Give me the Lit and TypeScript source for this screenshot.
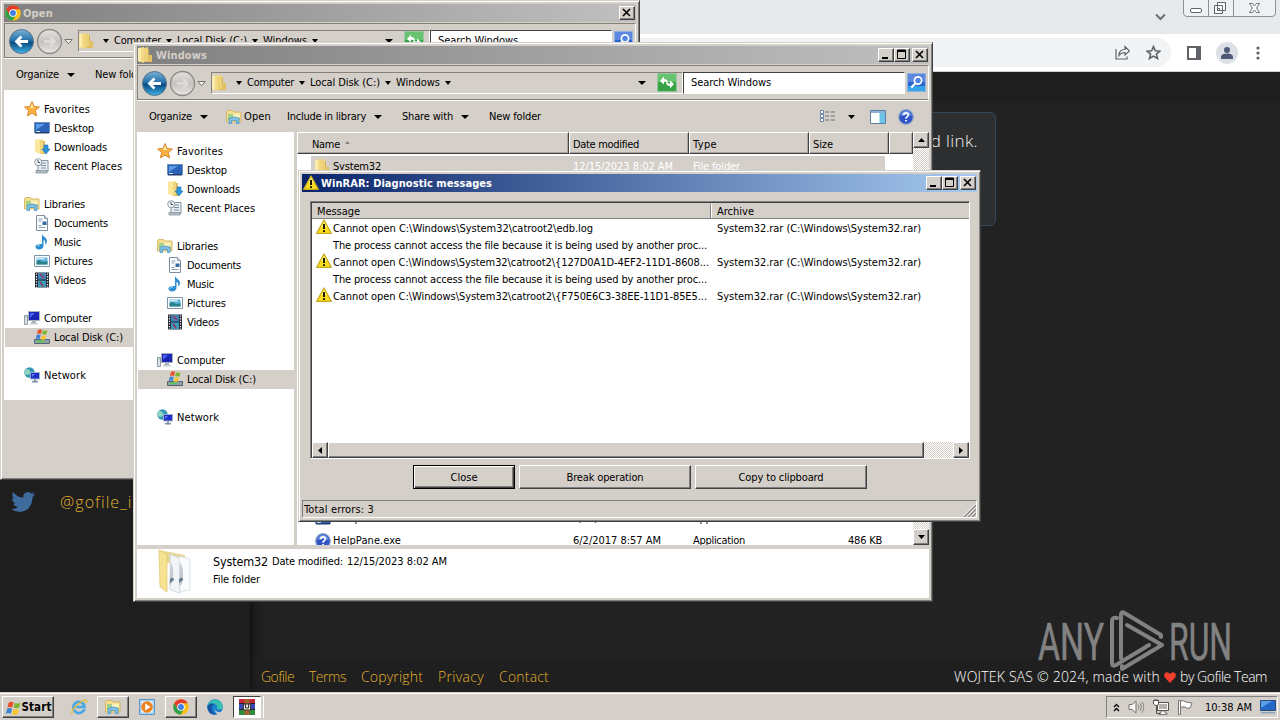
import { LitElement, html, css, svg } from "lit";
import { customElement, property } from "lit/decorators.js";
import { classMap } from "lit/directives/class-map.js";
import { styleMap } from "lit/directives/style-map.js";

const icon = (content: unknown, w = 16, h = 16, box = "0 0 16 16") =>
  html`<svg width=${w} height=${h} viewBox=${box}>${content}</svg>`;

const folder = svg`<path d="M0 1l6-1v16l-6-2z" fill="#f3d984"/><path d="M6 2h4l1 1v12H6z" fill="#d6ad4c"/><path d="M0 1h3v14l-3-1z" fill="#f9ecad"/><path d="M6 1l4-1v14l-4 1z" fill="#ecd179"/><path d="M10 8h4v7h-4z" fill="#e3c061"/>`;

const star = svg`<path d="M8 .5l2.100 5 5.400.5-4.200 3.600 1.400 5.400L8 12.200 3.300 15l1.400-5.400L.5 6l5.400-.5z" fill="#fbb040" stroke="#d98a38"/><path d="M8 2.500l1.400 4 2.600.6H6z" fill="#fff0a8"/>`;

const desktop = svg`<path d="M.5 2.500h15v10H.5z" fill="#2a62b8" stroke="#6d8fb5"/><path d="M2 4h9L2 10z" fill="#5a9ce6"/><path d="M1 12h14v1.500H1z" fill="#25406e"/><path d="M2 11h4v1H2z" fill="#cde"/>`;

const downloads = svg`<path d="M1 1l5-1v15l-5-2z" fill="#f9e79a"/><path d="M6 2h5v13H6z" fill="#dfbc5b"/><path d="M6 1l3-1v14l-3 1z" fill="#f0d67e"/><path d="M10 6h4v4h2l-4 5-4-5h2z" fill="#2b94dd" stroke="#1d6fb5" stroke-width=".6"/>`;

const recent = svg`<path d="M5 2.500h9v11H4v-6z" fill="#e8eef2" stroke="#8795a0"/><path d="M2 12.500h11v2.500H2z" fill="#b5c0c8" stroke="#7a8790" stroke-width=".7"/><path d="M7 5h5M7 7.500h5M7 10h5" stroke="#7d8f9f"/><circle cx="4.200" cy="4.200" r="3.500" fill="#f3f8fb" stroke="#8b9aa5"/><path d="M4 2v2.500h2" stroke="#456" fill="none"/>`;

const libraries = svg`<path d="M.5 3l1-1.500h5L8 3h7v10H.5z" fill="#f4de8b" stroke="#cfae58" stroke-width=".8"/><path d="M2 5h12v6H2z" fill="#9fd08c"/><path d="M7 4.500h7v4H7z" fill="#f9efb9"/><path d="M3 9.500q5-3 10 0v5h-2.500v-3h-5v3H3z" fill="#7fc3e8" stroke="#4e93c0" stroke-width=".8"/>`;

const documents = svg`<path d="M2.500.5h8l3 3v12h-11z" fill="#fbfdff" stroke="#7e8c9c"/><path d="M10.500.5v3h3" fill="#cbd8e6" stroke="#7e8c9c" stroke-width=".8"/><path d="M4.500 4h4M4.500 6h3M4.500 12.500h7M4.500 10.500h3" stroke="#74889f" stroke-width=".8"/><path d="M8.500 6.500h4v3.500h-4z" fill="#346ba3"/>`;

const music = svg`<path d="M8 0c1 3 5 3.500 5 7 0 2-1 3-2 3.500C12 7 10 6 9.500 6v6c0 2-2 3.500-4.500 3.500S1.500 14 1.500 12.500 3.500 10 8 10z" fill="#2e90d2"/><path d="M3 12.500q1-1.500 3-1.500" stroke="#9fdcff" fill="none"/>`;

const pictures = svg`<path d="M.5 2.500h15v11H.5z" fill="#fff" stroke="#7e95a8"/><path d="M2.500 4.500h11v7h-11z" fill="#5cb4df"/><path d="M2.500 8l3-1 4 2 4-1v3.500h-11z" fill="#2c7f8d"/><path d="M2.500 5h8v1.500h-8z" fill="#c9ebf8"/>`;

const videos = svg`<path d="M1 .5h14v15H1z" fill="#20262d"/><path d="M4 1h8v6.500H4z" fill="#3f85b8"/><path d="M4 8.500h8V15H4z" fill="#3a9bbf"/><path d="M6 2l4 4M6 10l3 4" stroke="#9b3555" stroke-width="1.500"/><path d="M2.500 1.500v14M13.500 1.500v14" stroke="#eef" stroke-width="1.300" stroke-dasharray="1.300 1.300"/>`;

const computer = svg`<path d="M.5 5.500h3v9h-3z" fill="#dce2e6" stroke="#929ca4"/><path d="M1.500 7h1" stroke="#55c040"/><path d="M4.500 1.500h11v9h-11z" fill="#1b25b5" stroke="#a8b4bd"/><path d="M6 3h5L6 8z" fill="#4a62ee"/><path d="M8 11h4v2.500H7z" fill="#aab4bd"/><path d="M6 13h8v1.500H6z" fill="#c7ced3"/>`;

const flag = svg`<path d="M4 1q2.500-1.500 4 0L7 5q-2-1-4 0z" fill="#e6532c"/><path d="M9 1.200q2 1 4.500 0L12.500 5.300Q10 6 8 5.100z" fill="#7cb42f"/><path d="M2.700 6q2-1 4 0l-1 4q-2-1-4 0z" fill="#3c83d4"/><path d="M7.800 6.200q2 1 4.500 0l-1 4.100q-2.500 1-4.500 0z" fill="#fbc52d"/>`;

const disk = svg`<path d="M.5 10.500h15v4H.5z" fill="#8fa0a8" stroke="#55656e"/><path d="M1 10l2-2h10l2 2z" fill="#cdd7dc"/><path d="M3 12.500h7" stroke="#52d04b" stroke-width="1.500"/>${flag}`;

const network = svg`<circle cx="5.500" cy="5.500" r="5.200" fill="#3798b5"/><path d="M2 2q3 0 4 2t-2 4q-3 0-3.500-2z" fill="#8ed8c0"/><path d="M6.500 5.500h9v6.500h-9z" fill="#202dc8" stroke="#9bb0c4"/><path d="M8 7h3l-3 3z" fill="#5a7cff"/><path d="M10 12.500h2V14h2v1.500H8V14h2z" fill="#7c8fa8"/>`;

const warning = svg`<path d="M8 1L15.300 14.300H.7z" fill="#f7dc22" stroke="#c9a91c" stroke-linejoin="round" stroke-width="1.300"/><path d="M8 2.500l3 5.500H5z" fill="#fff07a"/><path d="M8 5v5" stroke="#1d1a00" stroke-width="2"/><path d="M7 11.200h2v1.800H7z" fill="#1d1a00"/>`;

const help = svg`<circle cx="8" cy="8" r="7.300" fill="#2f55c4" stroke="#8fa4cf" stroke-width="1.200"/><path d="M2.500 7a5.500 5 0 0 1 11 0q-5-2-11 0" fill="#6f93e8"/><path d="M5.700 6.200Q5.700 3.900 8 3.900t2.300 2Q10.300 7.200 8.900 8q-.9.5-.9 1.700" fill="none" stroke="#fff" stroke-width="1.600"/><path d="M7.200 10.900h1.700v1.600H7.200z" fill="#fff"/>`;

const chrome = svg`<circle cx="8" cy="8" r="7.800" fill="#fbc116"/><path d="M8 8L1.200 4.200A7.800 7.800 0 0 1 14.800 4.200L8 4.300z" fill="#e33b2e"/><path d="M1.200 4.200A7.800 7.800 0 0 0 7.500 15.800L11.300 9.500 8 12 4.500 9.800z" fill="#2da14c"/><path d="M1.200 4.200l3.500 6L8 4.300z" fill="#e33b2e"/><path d="M1.200 4.200l3.200 5.500.6 2-3-1z" fill="#2da14c"/><circle cx="8" cy="8" r="3.800" fill="#fff"/><circle cx="8" cy="8" r="2.900" fill="#3f7fe8"/>`;

const ie = svg`<path d="M13.300 10A5.600 5.600 0 1 1 13.500 8H5" fill="none" stroke="#4aa9e4" stroke-width="2.700"/><path d="M1.500 15Q-1 13 4.500 7.500T14.500.8q1.700.7.2 3.500" fill="none" stroke="#e9bd3a" stroke-width="1.300"/>`;

const player = svg`<path d="M.5.5h15v15H.5z" fill="#a9cfee" stroke="#5b96c8"/><path d="M2.500 2.500h11v11h-11z" fill="#f5fafd"/><circle cx="8" cy="8" r="5.800" fill="#ee8120"/><path d="M6.200 4.500L11.500 8l-5.300 3.500z" fill="#fff"/>`;

const edge = svg`<circle cx="8" cy="8" r="7.800" fill="#1c7fd0"/><path d="M.3 8A7.800 7.800 0 0 1 15.800 7.500Q15.800 10.500 12.500 10.500q-2.500 0-2.500-1.500 1-3-2.500-4T.3 8" fill="#38c1b0"/><path d="M.3 7Q3 3 7.500 5q-3 1.500-2.500 5t4 5.800Q.5 16 .3 7" fill="#1556a5"/><path d="M8 8q-1 4 3 5t4-1l.5 1.500L12 16Q7 14 8 8" fill="#d5cfc9"/>`;

const rar = svg`<path d="M0 0h7v4H0z" fill="#c6273a"/><path d="M9 0h7v4H9z" fill="#c6273a"/><path d="M0 5h16v5H0z" fill="#3a49b5"/><path d="M0 11h16v5H0z" fill="#2f8a3c"/><path d="M0 4.500h16M0 10.500h16" stroke="#222"/><path d="M5.500 0h5v16h-5z" fill="#a3622e"/><path d="M4.500 5h7v6h-7z" fill="#ede4d8" stroke="#333"/><path d="M6.500 5v4h3V5" fill="none" stroke="#333"/>`;

const swirl = svg`<rect x=".5" y=".5" width="19" height="18" fill="#36a345" stroke="#99c8a0"/><path d="M1 1h18v8H1z" fill="#67c370"/><path d="M3 8l4-4.500V6q4 0 4 4-1.500-1.500-4-1.500v3z" fill="#fff"/><path d="M17 11l-4 4.500V13q-4 0-4-4 1.500 1.500 4 1.500v-3z" fill="#fff"/>`;

const magnifier = svg`<rect x=".5" y=".5" width="18" height="18" fill="#2765cf" stroke="#8fb1e0"/><path d="M1 1h17v8H1z" fill="#5d86de"/><path d="M1 13h17v5H1z" fill="#36a5e8"/><circle cx="11" cy="7.500" r="3.600" fill="#4f83e3" stroke="#fff" stroke-width="1.700"/><path d="M8.300 10.500l-4 4" stroke="#fff" stroke-width="2.200"/>`;

// One line of interface text, tracked out or in to the advance width given.
@customElement("ui-label")
export class UiLabel extends LitElement {
  @property() text = "";
  @property({ type: Number }) w = 0;

  static styles = css`
    :host {
      display: inline-block;
      flex: none;
      white-space: pre;
    }
  `;

  firstUpdated() {
    const span = this.renderRoot.querySelector("span")!;
    const gap = (this.w - span.getBoundingClientRect().width) / this.text.length;
    span.style.letterSpacing = `${gap}px`;
    this.style.width = `${this.w}px`;
  }

  render() {
    return html`<span>${this.text}</span>`;
  }
}

const label = (text: string, w: number, cls = "") =>
  html`<ui-label class=${cls} .text=${text} .w=${w}></ui-label>`;

@customElement("classic-window")
export class ClassicWindow extends LitElement {
  @property() caption = "";
  @property({ type: Number }) captionWidth = 50;
  @property({ type: Boolean }) active = false;
  @property({ type: Boolean }) closeOnly = false;

  static styles = css`
    :host {
      display: flex;
      flex-direction: column;
      box-sizing: border-box;
      border: 1px solid;
      border-color: #d5cfc9 #404040 #404040 #d5cfc9;
      padding: 3px;
      background: #d5cfc9;
      box-shadow: inset 1px 1px #fff, inset -1px -1px #808080;
    }
    .title {
      display: flex;
      align-items: center;
      flex: none;
      height: 18px;
      margin-bottom: 1px;
      padding: 0 1px;
      background: linear-gradient(90deg, #808080, #c0c0c0);
      color: #d5cfc9;
      font-weight: bold;
    }
    .title.active {
      background: linear-gradient(90deg, #0a246a, #a6caf0);
      color: #fff;
    }
    .icon {
      display: flex;
      width: 16px;
      margin-right: 2px;
    }
    .buttons {
      display: flex;
      margin-left: auto;
    }
    .button {
      box-sizing: border-box;
      width: 16px;
      height: 14px;
      border: 1px solid;
      border-color: #fff #404040 #404040 #fff;
      background: #d5cfc9;
      box-shadow: inset -1px -1px #808080;
    }
    .close {
      margin-left: 2px;
    }
    svg {
      display: block;
    }
    slot {
      display: block;
    }
    .content {
      display: flex;
      flex-direction: column;
      flex: 1;
      min-height: 0;
    }
  `;

  button(path: unknown, cls = "") {
    return html`<div class="button ${cls}">${icon(path, 14, 12, "0 0 14 12")}</div>`;
  }

  render() {
    return html`
      <div class=${classMap({ title: true, active: this.active })}>
        <span class="icon"><slot name="icon"></slot></span>
        ${label(this.caption, this.captionWidth)}
        <div class="buttons">
          ${this.closeOnly
            ? ""
            : html`${this.button(svg`<path d="M3 8h6v2H3z"/>`)}
              ${this.button(svg`<path d="M2.500 1v8.500h8V1z" fill="none" stroke="#000"/><path d="M2 1h9v2H2z"/>`)}`}
          ${this.button(svg`<path d="M3 2l7 7M10 2L3 9" stroke="#000" stroke-width="1.600"/>`, "close")}
        </div>
      </div>
      <div class="content"><slot></slot></div>
    `;
  }
}

const places: [string, number, unknown, boolean][][] = [
  [
    ["Favorites", 46, star, false],
    ["Desktop", 40, desktop, true],
    ["Downloads", 53, downloads, true],
    ["Recent Places", 68, recent, true],
  ],
  [
    ["Libraries", 41, libraries, false],
    ["Documents", 54, documents, true],
    ["Music", 27, music, true],
    ["Pictures", 39, pictures, true],
    ["Videos", 32, videos, true],
  ],
  [
    ["Computer", 48, computer, false],
    ["Local Disk (C:)", 69, disk, true],
  ],
  [["Network", 42, network, false]],
];

@customElement("explorer-window")
export class ExplorerWindow extends LitElement {
  @property({ type: Boolean }) picker = false;

  static styles = css`
    :host {
      display: block;
    }
    classic-window {
      width: 800px;
      height: 560px;
    }
    .picker classic-window {
      width: 640px;
      height: 480px;
    }
    svg {
      display: block;
      flex: none;
    }
    .address {
      display: flex;
      align-items: center;
      box-sizing: border-box;
      height: 35px;
      margin-bottom: 1px;
      border: 1px solid #858078;
      border-right-color: #fff;
      box-shadow: 0 1px #fff;
      padding-left: 3px;
    }
    .address .drop {
      margin: 2px 5px 0 -1px;
    }
    .path {
      display: flex;
      align-items: center;
      flex: 1;
      box-sizing: border-box;
      height: 22px;
      border: 1px solid;
      border-color: #858078 #fff #fff #858078;
    }
    .path .arrow {
      margin: 0 5px 0 8px;
    }
    .path .arrow.tight {
      margin: 0 5px;
    }
    .path .arrow.end {
      margin: 0 0 0 auto;
    }
    .refresh {
      margin: 0 5px 0 11px;
    }
    .search {
      display: flex;
      align-items: center;
      box-sizing: border-box;
      width: 222px;
      height: 22px;
      padding-left: 7px;
      border: 1px solid;
      border-color: #404040 #fff #fff #404040;
      background: #fff;
      margin-right: 2px;
    }
    .picker .search {
      width: 182px;
    }
    .find {
      margin-right: 2px;
    }
    .commands {
      display: flex;
      align-items: center;
      height: 31px;
      flex: none;
      padding: 0 15px 0 12px;
    }
    .commands .arrow {
      margin: 0 20px 0 8px;
    }
    .commands .open {
      margin: 0 2px 0 -2px;
    }
    .gap {
      width: 16px;
    }
    .commands .views {
      margin-left: auto;
    }
    .commands .arrow.right {
      margin: 0 15px 0 13px;
    }
    .help {
      margin-left: 12px;
    }
    .body {
      display: flex;
      flex: 1;
      min-height: 0;
    }
    .body {
      height: 413px;
    }
    .picker .body {
      height: 310px;
    }
    .places {
      box-sizing: border-box;
      width: 157px;
      background: #fff;
      padding-top: 10px;
    }
    .group {
      margin-bottom: 19px;
    }
    .place {
      display: flex;
      align-items: center;
      height: 19px;
      padding-left: 20px;
    }
    .place svg {
      margin: -2px 4px 0 0;
    }
    .place.child {
      padding-left: 29px;
      margin-left: 1px;
    }
    .place.child svg {
      margin-right: 4px;
    }
    .place.current {
      background: #d5cfc9;
    }
    .list {
      display: flex;
      flex-direction: column;
      flex: 1;
      margin-left: 3px;
      background: #fff;
      overflow: hidden;
    }
    .head {
      display: flex;
      height: 22px;
      flex: none;
      margin-bottom: 2px;
    }
    .cell {
      display: flex;
      align-items: center;
      box-sizing: border-box;
      padding: 2px 0 0 3px;
      border: 1px solid;
      border-color: #fff #404040 #404040 #fff;
      background: #d5cfc9;
      box-shadow: inset -1px -1px #aaa49c;
    }
    .name {
      width: 272px;
      flex: none;
    }
    .cell.name {
      padding-left: 14px;
    }
    .sort {
      margin: -3px 0 0 5px;
    }
    .mid {
      width: 120px;
      flex: none;
    }
    .size {
      width: 80px;
      flex: none;
    }
    .fill {
      flex: 1;
    }
    .row {
      display: flex;
      align-items: center;
      height: 19px;
      flex: none;
    }
    .row .name {
      display: flex;
      align-items: center;
      box-sizing: border-box;
      padding-left: 18px;
    }
    .row .name svg {
      margin-right: 2px;
    }
    .row .mid {
      padding-left: 4px;
      box-sizing: border-box;
    }
    .row .size {
      text-align: right;
      width: 73px;
    }
    .row.selected {
      width: 574px;
      height: 21px;
      margin-left: 14px;
      background: #d5cfc9;
      color: #fff;
    }
    .row.selected .name {
      width: 258px;
      padding-left: 4px;
      color: #000;
    }
    .rest {
      display: flex;
      flex-direction: column;
      gap: 3px;
      margin-top: auto;
      margin-bottom: -5px;
    }
    .scroll {
      display: flex;
      flex-direction: column;
      justify-content: space-between;
      width: 16px;
      background: repeating-conic-gradient(#fff 0 25%, #d5cfc9 0 50%) 0 0 / 2px 2px;
    }
    .knob {
      display: grid;
      place-items: center;
      box-sizing: border-box;
      height: 16px;
      border: 1px solid;
      border-color: #fff #404040 #404040 #fff;
      background: #d5cfc9;
      box-shadow: inset -1px -1px #808080;
    }
    .details {
      display: flex;
      box-sizing: border-box;
      height: 49px;
      margin-top: 4px;
      background: #fff;
      padding-left: 21px;
    }
    .info {
      padding: 4px 0 0 20px;
      line-height: 18px;
    }
    .first {
      display: flex;
      gap: 4px;
    }
    .big {
      font-size: 12.5px;
    }
  `;

  arrow(cls = "", w = 8) {
    return html`<svg class="arrow ${cls}" width=${w} height="4" viewBox="0 0 7 4" preserveAspectRatio="none">
      <path d="M0 0h7L3.500 4z" />
    </svg>`;
  }

  place([text, w, glyph, child]: [string, number, unknown, boolean]) {
    const current = text.startsWith("Local");
    return html`<div class=${classMap({ place: true, child, current })}>
      ${icon(glyph)} ${label(text, w)}
    </div>`;
  }

  address() {
    return html`<div class="address">
      <svg width="57" height="28" viewBox="0 0 57 28">
        <defs>
          <linearGradient id="b" x2="0" y2="1">
            <stop stop-color="#7db0d6" />
            <stop offset=".45" stop-color="#2272aa" />
            <stop offset=".55" stop-color="#0a4c80" />
            <stop offset="1" stop-color="#3fb4ea" />
          </linearGradient>
          <linearGradient id="f" x2="0" y2="1">
            <stop stop-color="#e5e3e0" />
            <stop offset=".5" stop-color="#c5c2bf" />
            <stop offset="1" stop-color="#e9e8e6" />
          </linearGradient>
        </defs>
        <circle cx="13.500" cy="14.500" r="12" fill="url(#b)" stroke="#58738b" />
        <path d="M20 14.500H9M13.500 9.500l-5 5 5 5" fill="none" stroke="#fff" stroke-width="2.800" />
        <circle cx="41.500" cy="14.500" r="12" fill="url(#f)" stroke="#8c8a88" stroke-width="1.300" />
        <path d="M36 14.500h10M42 10l4.500 4.500-4.500 4.500" fill="none" stroke="#dedcda" stroke-width="2.500" />
      </svg>
      <svg class="drop" width="9" height="6" viewBox="0 0 9 6">
        <path d="M.8.500h7.400L4.500 4.800z" fill="#eee" stroke="#77736e" />
      </svg>
      <div class="path">
        ${icon(folder)} ${this.arrow("", 6)} ${label("Computer", 47)}
        ${this.arrow("tight", 6)} ${label("Local Disk (C:)", 70)}
        ${this.arrow("tight", 6)} ${label("Windows", 44)}
        ${this.arrow("tight", 6)} ${this.arrow("end")}
        <span class="refresh">${icon(swirl, 20, 19, "0 0 20 19")}</span>
      </div>
      <div class="search">${label("Search Windows", 80)}</div>
      <span class="find">${icon(magnifier, 19, 19, "0 0 19 19")}</span>
    </div>`;
  }

  commands() {
    if (this.picker) {
      return html`<div class="commands">
        ${label("Organize", 43)} ${this.arrow()} ${label("New folder", 52)}
      </div>`;
    }
    return html`<div class="commands">
      ${label("Organize", 43)} ${this.arrow()}
      <span class="open">${icon(libraries)}</span>
      ${label("Open", 27)} <span class="gap"></span>
      ${label("Include in library", 79)} ${this.arrow()} ${label("Share with", 51)}
      ${this.arrow()} ${label("New folder", 52)}
      <svg class="views" width="15" height="13" viewBox="0 0 15 13">
        <path d="M.5.500h3v3h-3zM.5 4.500h3v3h-3zM.5 8.500h3v3h-3z" fill="#fff" stroke="#6a7fa5" />
        <path d="M5 2h4M10.500 2H15M5 6h4M10.500 6H15M5 10h4M10.500 10H15" stroke="#6c6c78" />
      </svg>
      ${this.arrow("right", 7)}
      <svg width="16" height="14" viewBox="0 0 16 14">
        <path d="M.5.500h15v13H.5z" fill="#fff" stroke="#5c7fa5" />
        <path d="M1 1h14v2H1z" fill="#8fb2d5" />
        <path d="M9.500 3h5.500v10H9.500z" fill="#6fc2e8" />
      </svg>
      <span class="help">${icon(help)}</span>
    </div>`;
  }

  files() {
    return html`<div class="list">
        <div class="head">
          <div class="cell name">
            ${label("Name", 28)}
            <svg class="sort" width="5" height="3" viewBox="0 0 5 3"><path d="M0 3h5L2.500 0z" fill="#88827b" /></svg>
          </div>
          <div class="cell mid">${label("Date modified", 66)}</div>
          <div class="cell mid">${label("Type", 24)}</div>
          <div class="cell size">${label("Size", 20)}</div>
          <div class="cell fill"></div>
        </div>
        <div class="row selected">
          <div class="name">${icon(folder)} ${label("System32", 48)}</div>
          <div class="mid">${label("12/15/2023 8:02 AM", 100)}</div>
          <div class="mid">${label("File folder", 47)}</div>
        </div>
        <div class="rest">
          <div class="row">
            <div class="name">${icon(desktop)} ${label("fveupdate.exe", 70)}</div>
            <div class="mid">${label("7/14/2009 3:39 AM", 93)}</div>
            <div class="mid">${label("Application", 52)}</div>
            <div class="size">${label("14 KB", 28)}</div>
          </div>
          <div class="row">
            <div class="name">${icon(help)} ${label("HelpPane.exe", 68)}</div>
            <div class="mid">${label("6/2/2017 8:57 AM", 88)}</div>
            <div class="mid">${label("Application", 52)}</div>
            <div class="size">${label("486 KB", 34)}</div>
          </div>
        </div>
      </div>
      <div class="scroll">
        <div class="knob"><svg width="7" height="4" viewBox="0 0 7 4"><path d="M0 4h7L3.500 0z" /></svg></div>
        <div class="knob"><svg width="7" height="4" viewBox="0 0 7 4"><path d="M0 0h7L3.500 4z" /></svg></div>
      </div>`;
  }

  details() {
    return html`<div class="details">
      <svg width="35" height="46" viewBox="0 0 35 46">
        <path d="M1 1l26 5v9L9 14z" fill="#e8d896" />
        <path d="M12 5l10 4v35l-10-3z" fill="#f2f5f7" stroke="#c5cbd0" stroke-width=".7" />
        <path d="M21 7l11 3v31l-10 2z" fill="#fafbfc" stroke="#cfd5da" stroke-width=".7" />
        <path d="M13 13q4 10 1 21l-3 2zM22 13q5 9 2 22l-3 2z" fill="#c3cad1" />
        <path d="M12 30q4-3 4 1l-4 3zM21 30q4-3 4 1l-4 3z" fill="#667c91" />
        <path d="M1 1l8 4v38L2 38z" fill="#f5e391" stroke="#dcc46c" stroke-width=".7" />
      </svg>
      <div class="info">
        <div class="first">
          ${label("System32", 55, "big")} ${label("Date modified:", 71)}
          ${label("12/15/2023 8:02 AM", 100)}
        </div>
        ${label("File folder", 47)}
      </div>
    </div>`;
  }

  render() {
    return html`<div class=${classMap({ picker: this.picker })}>
      <classic-window
        caption=${this.picker ? "Open" : "Windows"}
        .captionWidth=${this.picker ? 30 : 51}
        ?closeOnly=${this.picker}
      >
        <span slot="icon">${icon(this.picker ? chrome : folder)}</span>
        ${this.address()} ${this.commands()}
        <div class="body">
          <div class="places">
            ${places.map((group) => html`<div class="group">${group.map((p) => this.place(p))}</div>`)}
          </div>
          ${this.picker ? "" : this.files()}
        </div>
        ${this.picker ? "" : this.details()}
      </classic-window>
    </div>`;
  }
}

const locked = "The process cannot access the file because it is being used by another proc...";
const messages: [string, number, boolean][] = [
  ["Cannot open C:\\Windows\\System32\\catroot2\\edb.log", 260, true],
  [locked, 374, false],
  ["Cannot open C:\\Windows\\System32\\catroot2\\{127D0A1D-4EF2-11D1-8608...", 376, true],
  [locked, 374, false],
  ["Cannot open C:\\Windows\\System32\\catroot2\\{F750E6C3-38EE-11D1-85E5...", 374, true],
];

@customElement("diagnostic-dialog")
export class DiagnosticDialog extends LitElement {
  static styles = css`
    :host {
      display: block;
    }
    classic-window {
      width: 683px;
      height: 352px;
    }
    svg {
      display: block;
      flex: none;
    }
    .table {
      display: flex;
      flex-direction: column;
      box-sizing: border-box;
      height: 258px;
      margin: 8px 7px 6px 8px;
      border: 1px solid;
      border-color: #808080 #fff #fff #808080;
      box-shadow: inset 1px 1px #404040;
      padding: 1px 0 0 1px;
      background: #fff;
    }
    .head,
    .row {
      display: flex;
      align-items: center;
    }
    .head {
      box-sizing: border-box;
      height: 16px;
      padding-top: 1px;
      background: #d5cfc9;
      border-bottom: 1px solid #808080;
      margin-bottom: 1px;
    }
    .message {
      display: flex;
      align-items: center;
      box-sizing: border-box;
      width: 400px;
      height: 100%;
      padding-left: 21px;
      flex: none;
    }
    .head .message {
      padding-left: 5px;
      width: 399px;
      border-right: 1px solid #808080;
    }
    .archive {
      padding-left: 5px;
    }
    .head .archive {
      display: flex;
      align-items: center;
      height: 100%;
      border-left: 1px solid #fff;
      padding-left: 5px;
    }
    .row {
      height: 17px;
    }
    .flagged {
      padding-left: 4px;
    }
    .flagged svg {
      margin: -3px 1px 0 0;
    }
    .scroll {
      display: flex;
      justify-content: space-between;
      height: 16px;
      margin-top: auto;
      background: repeating-conic-gradient(#fff 0 25%, #d5cfc9 0 50%) 0 0 / 2px 2px;
    }
    .knob,
    .thumb,
    .button {
      box-sizing: border-box;
      border: 1px solid;
      border-color: #fff #404040 #404040 #fff;
      background: #d5cfc9;
      box-shadow: inset -1px -1px #808080;
    }
    .knob {
      display: grid;
      place-items: center;
      width: 16px;
    }
    .thumb {
      width: 596px;
      margin-right: auto;
    }
    .actions {
      display: flex;
      gap: 4px;
      margin-bottom: 11px;
      padding-left: 111px;
    }
    .button {
      display: grid;
      place-items: center;
      width: 172px;
      height: 24px;
    }
    .default {
      width: 102px;
      border-color: #000;
      box-shadow: inset 1px 1px #fff, inset -1px -1px #404040, inset -2px -2px #808080;
    }
    .status {
      display: flex;
      align-items: center;
      justify-content: space-between;
      box-sizing: border-box;
      height: 18px;
      padding-left: 1px;
      border: 1px solid;
      border-color: #808080 #fff #fff #808080;
    }
    .status svg {
      align-self: flex-end;
    }
  `;

  render() {
    return html`<classic-window caption="WinRAR: Diagnostic messages" .captionWidth=${171} active>
      <span slot="icon">${icon(warning)}</span>
      <div class="table">
        <div class="head">
          <div class="message">${label("Message", 43)}</div>
          <div class="archive">${label("Archive", 37)}</div>
        </div>
        ${messages.map(
          ([text, w, flagged]) => html`<div class="row">
            <div class=${classMap({ message: true, flagged })}>
              ${flagged ? icon(warning) : ""} ${label(text, w)}
            </div>
            <div class="archive">
              ${flagged ? label("System32.rar (C:\\Windows\\System32.rar)", 204) : ""}
            </div>
          </div>`
        )}
        <div class="scroll">
          <div class="knob"><svg width="4" height="7" viewBox="0 0 4 7"><path d="M4 0v7L0 3.500z" /></svg></div>
          <div class="thumb"></div>
          <div class="knob"><svg width="4" height="7" viewBox="0 0 4 7"><path d="M0 0v7l4-3.500z" /></svg></div>
        </div>
      </div>
      <div class="actions">
        <div class="button default">${label("Close", 27)}</div>
        <div class="button">${label("Break operation", 77)}</div>
        <div class="button">${label("Copy to clipboard", 85)}</div>
      </div>
      <div class="status">
        ${label("Total errors: 3", 70)}
        <svg width="13" height="13" viewBox="0 0 13 13">
          <path d="M1 13L13 1M5 13l8-8M9 13l4-4" stroke="#808080" stroke-width="1.500" />
          <path d="M0 12.500L12.500 0M4 12.500L12.500 4M8 12.500L12.500 8" stroke="#fff" />
        </svg>
      </div>
    </classic-window>`;
  }
}

@customElement("task-bar")
export class TaskBar extends LitElement {
  static styles = css`
    :host {
      display: flex;
      align-items: flex-start;
      box-sizing: border-box;
      height: 28px;
      padding: 3px 2px 0;
      border-top: 1px solid #d5cfc9;
      box-shadow: inset 0 1px #fff;
      background: #d5cfc9;
    }
    svg {
      display: block;
      flex: none;
    }
    .start,
    .task {
      display: flex;
      align-items: center;
      justify-content: center;
      box-sizing: border-box;
      height: 22px;
      width: 32px;
    }
    .start,
    .raised {
      border: 1px solid;
      border-color: #fff #404040 #404040 #fff;
      box-shadow: inset -1px -1px #808080;
    }
    .start {
      width: 52px;
      margin-right: 9px;
      gap: 1px;
      font-weight: bold;
      font-size: 11.500px;
    }
    .task {
      margin-right: 2px;
    }
    .pressed {
      width: 28px;
      border: 1px solid;
      border-color: #404040 #fff #fff #404040;
      background: #fff;
      box-shadow: 2px 0 #d5cfc9, 3px 0 #fff;
    }
    .tray {
      display: flex;
      align-items: center;
      box-sizing: border-box;
      width: 172px;
      height: 22px;
      margin-left: auto;
      padding-left: 6px;
      border: 1px solid;
      border-color: #808080 #fff #fff #808080;
      gap: 8px;
    }
    .clock {
      margin: 0 0 0 4px;
    }
  `;

  task(glyph: unknown, cls = "") {
    return html`<div class="task ${cls}">${icon(glyph)}</div>`;
  }

  render() {
    return html`
      <div class="start">${icon(flag, 16, 15, "1 -1 13 12")} ${label("Start", 30)}</div>
      ${this.task(ie)} ${this.task(libraries, "raised")} ${this.task(player)}
      ${this.task(chrome, "raised")} ${this.task(edge)} ${this.task(rar, "pressed")}
      <div class="tray">
        <svg width="7" height="9" viewBox="0 0 7 9">
          <path d="M1 4l2.500-2.500L6 4M1 8l2.500-2.500L6 8" fill="none" stroke="#000" stroke-width="1.300" />
        </svg>
        <svg width="17" height="16" viewBox="0 0 17 16">
          <path d="M1 5.500h3L8 2v12l-4-3.500H1z" fill="#f5f5f3" stroke="#77736e" />
          <path d="M10 5.500q2 2.500 0 5M12 4q3 4 0 8M14 2.500q3.500 5.500 0 11" fill="none" stroke="#8b8782" />
        </svg>
        <svg width="16" height="16" viewBox="0 0 16 16">
          <path d="M4.500 3.500h11v8h-11z" fill="#b5b1ac" stroke="#55524e" />
          <path d="M5.500 4.500h9v6h-9z" fill="none" stroke="#fff" />
          <path d="M8 12h4v2h2v1.500H6V14h2z" fill="#fff" stroke="#66625e" stroke-width=".8" />
          <path d="M.5 1.500h5V5q0 1.500-2 1.500T.5 5z" fill="#fff" stroke="#55524e" />
          <path d="M2 0v2M4 0v2M3.500 6.500v8h4" fill="none" stroke="#55524e" />
        </svg>
        <svg width="16" height="16" viewBox="0 0 16 16">
          <path d="M1.500 1.500v14h2v-14z" fill="#fff" stroke="#77736e" />
          <path d="M3.500 2q3-1 5.500 1l6 1-2 5q-3 1-5-1-2-.5-4.500.5z" fill="#fff" stroke="#77736e" />
        </svg>
        ${label("10:38 AM", 47, "clock")}
        <svg width="16" height="14" viewBox="0 0 16 14">
          <path d="M.5.500h15v10H.5z" fill="#2468c7" stroke="#2b4d7e" />
          <path d="M1 1h11L1 8z" fill="#5aa0e8" />
          <path d="M1 12h14v1.500H1z" fill="#8aa5bd" />
        </svg>
      </div>
    `;
  }
}

@customElement("web-browser")
export class WebBrowser extends LitElement {
  static styles = css`
    :host {
      display: flex;
      flex-direction: column;
      background: #222;
      color: #f2f2f2;
    }
    svg {
      display: block;
    }
    .tabs {
      display: flex;
      justify-content: flex-end;
      align-items: flex-start;
      height: 34px;
      padding-right: 4px;
      background: #e7eaed;
    }
    .more {
      margin: 13px 17px 0 0;
    }
    .toolbar {
      display: flex;
      align-items: center;
      box-sizing: border-box;
      height: 38px;
      border-bottom: 1px solid #cfd1d3;
      background: #fff;
      padding-right: 16px;
    }
    .omnibox {
      display: flex;
      align-items: center;
      justify-content: flex-end;
      box-sizing: border-box;
      gap: 16px;
      width: 1171px;
      height: 29px;
      padding-right: 10px;
      border-radius: 0 15px 15px 0;
      background: #f1f3f5;
    }
    .tools {
      display: flex;
      align-items: center;
      flex: 1;
      justify-content: space-between;
      padding-left: 16px;
    }
    .page {
      display: flex;
      flex: 1;
    }
    .side {
      box-sizing: border-box;
      width: 250px;
      padding: 419px 0 0 11px;
      background: #1e1e1e;
      box-shadow: 2px 0 10px #0c0c0c;
    }
    .handle {
      display: flex;
      align-items: center;
      gap: 24px;
      color: #e2b02c;
      font-size: 16px;
    }
    .main {
      display: flex;
      flex-direction: column;
      flex: 1;
    }
    .bar {
      height: 31px;
      background: #1e1e1e;
    }
    .alert {
      box-sizing: border-box;
      width: 700px;
      height: 114px;
      margin: 9px 0 0 46px;
      padding: 17px 17px 0 0;
      border: 1px solid #34495a;
      border-radius: 6px;
      background: #2d2e2f;
      text-align: right;
      font-size: 17px;
    }
    .footer {
      display: flex;
      align-items: center;
      box-sizing: border-box;
      height: 34px;
      margin-top: auto;
      padding: 4px 13px 0 11px;
      background: linear-gradient(90deg, #0c0c0c00, #1f1f1f 12px);
      font-size: 14px;
    }
    .links {
      display: flex;
      gap: 15px;
      color: #e2b02c;
    }
    .credit {
      display: flex;
      align-items: center;
      gap: 4px;
      margin-left: auto;
      color: #fff;
    }
  `;

  render() {
    return html`
      <div class="tabs">
        <svg class="more" width="11" height="8" viewBox="0 0 11 8">
          <path d="M1 1.500l4.500 4.500L10 1.500" fill="none" stroke="#6b6e72" stroke-width="2" />
        </svg>
        <svg width="93" height="17" viewBox="0 0 93 17">
          <path d="M.5 0v13q0 3.500 3.500 3.500h85q3.500 0 3.500-3.500V0M25.500 0v16M50.500 0v16" fill="#eef0f3" stroke="#8d9298" />
          <rect x="7.500" y="8.500" width="11" height="4" rx="1.500" fill="#fff" stroke="#5f646b" />
          <path d="M34.500 2.500h8v8h-8zM31.500 5.500h8v8h-8z" fill="#fff" stroke="#5f646b" />
          <path d="M34.500 8.500h2v2h-2z" fill="#fff" stroke="#5f646b" />
          <path d="M66.500 3.500h3l2 2.500 2-2.500h3L73.500 8l3 4.500h-3l-2-2.500-2 2.500h-3l3-4.500z" fill="#fff" stroke="#6f747b" />
        </svg>
      </div>
      <div class="toolbar">
        <div class="omnibox">
          <svg width="15" height="15" viewBox="0 0 15 15">
            <path d="M1 4v10h11v-2.500M4 10.500q0-6 6-6v-3l4.500 4.500L10 10V7.500q-4 0-6 3z" fill="none" stroke="#5f6368" stroke-width="1.200" />
          </svg>
          <svg width="15" height="15" viewBox="0 0 15 15">
            <path d="M7.500 1.500l1.800 4.200 4.600.4-3.500 3 1.100 4.400-4-2.400-4 2.400 1.100-4.400-3.500-3 4.600-.4z" fill="none" stroke="#5f6368" stroke-width="1.600" />
          </svg>
        </div>
        <div class="tools">
          <svg width="14" height="14" viewBox="0 0 14 14">
            <path d="M1 1h12v12H1z" fill="#fff" stroke="#5f6368" stroke-width="2" />
            <path d="M9 1h4v12H9z" fill="#5f6368" />
          </svg>
          <svg width="22" height="22" viewBox="0 0 22 22">
            <circle cx="11" cy="11" r="11" fill="#dde1e7" />
            <circle cx="11" cy="8" r="3" fill="#4d5b78" />
            <path d="M5 17v-2q0-3.500 6-3.500t6 3.500v2z" fill="#4d5b78" />
          </svg>
          <svg width="12" height="14" viewBox="0 0 12 14">
            <circle cx="6" cy="2" r="1.600" fill="#5f6368" />
            <circle cx="6" cy="7" r="1.600" fill="#5f6368" />
            <circle cx="6" cy="12" r="1.600" fill="#5f6368" />
          </svg>
        </div>
      </div>
      <div class="page">
        <div class="side">
          <div class="handle">
            <svg width="25" height="21" viewBox="0 0 25 21">
              <path d="M0 17q4 .5 7-2-4-.5-4.500-3.500h2Q1 10 1 6l2.200.7Q0 4 2 0q4.500 5.500 10.500 5.500-.8-5 4.300-5.500 2 0 3.500 1.500L23.500.2q-.6 1.800-2 2.800L24 2.500q-1 1.500-2.500 2.500Q21.500 12 17 17 9 23 0 17" fill="#3d6b9c" />
            </svg>
            ${label("@gofile_io", 83)}
          </div>
        </div>
        <div class="main">
          <div class="bar"></div>
          <div class="alert">${label("Click here to copy the download link.", 293)}</div>
          <div class="footer">
            <div class="links">
              ${label("Gofile", 33)} ${label("Terms", 37)} ${label("Copyright", 62)}
              ${label("Privacy", 46)} ${label("Contact", 50)}
            </div>
            <div class="credit">
              ${label("WOJTEK SAS © 2024, made with", 206)}
              <svg width="12" height="11" viewBox="0 0 12 11">
                <path d="M6 11L.8 5.500Q-.8 2.500 1.500.8 4-.6 6 2q2-2.600 4.500-1.200 2.300 1.700.7 4.700z" fill="#f0402d" />
              </svg>
              ${label("by Gofile Team", 87)}
            </div>
          </div>
        </div>
      </div>
    `;
  }
}

@customElement("app-root")
export class AppRoot extends LitElement {
  static styles = css`
    :host {
      display: flex;
      flex-direction: column;
      position: relative;
      width: 1280px;
      height: 720px;
      overflow: hidden;
      font: 11px/13px "DejaVu Sans Condensed", "DejaVu Sans", sans-serif;
      color: #000;
    }
    web-browser {
      flex: 1;
      font-family: "Open Sans", "Noto Sans", sans-serif;
      font-weight: 300;
      line-height: 22px;
    }
    .window {
      position: absolute;
    }
    .watermark {
      position: absolute;
      left: 1036px;
      top: 606px;
      opacity: 0.62;
      font-family: Roboto, "Liberation Sans", sans-serif;
    }
  `;

  render() {
    const windows: [number, number, unknown][] = [
      [0, 0, html`<explorer-window picker></explorer-window>`],
      [133, 42, html`<explorer-window></explorer-window>`],
      [298, 170, html`<diagnostic-dialog></diagnostic-dialog>`],
    ];
    return html`
      <web-browser></web-browser>
      <task-bar></task-bar>
      ${windows.map(
        ([x, y, view]) =>
          html`<div class="window" style=${styleMap({ left: `${x}px`, top: `${y}px` })}>${view}</div>`
      )}
      <svg class="watermark" width="200" height="70" viewBox="0 0 200 70">
        <g fill="#bdbdbd" stroke="#bdbdbd" stroke-width=".6" font-size="52">
          <text x="2" y="54" textLength="66" lengthAdjust="spacingAndGlyphs">ANY</text>
          <text x="133" y="54" textLength="63" lengthAdjust="spacingAndGlyphs">RUN</text>
        </g>
        <g fill="none" stroke="#bdbdbd" stroke-width="4" stroke-linejoin="round" stroke-linecap="round">
          <path d="M85 52V9q0-4 3.500-2L125 29v2M91 19l35 20-40 24v-3" />
          <path d="M81 12q-5-1-5 3v42q0 4 4 2l33-20M85 52V18" />
        </g>
      </svg>
    `;
  }
}
